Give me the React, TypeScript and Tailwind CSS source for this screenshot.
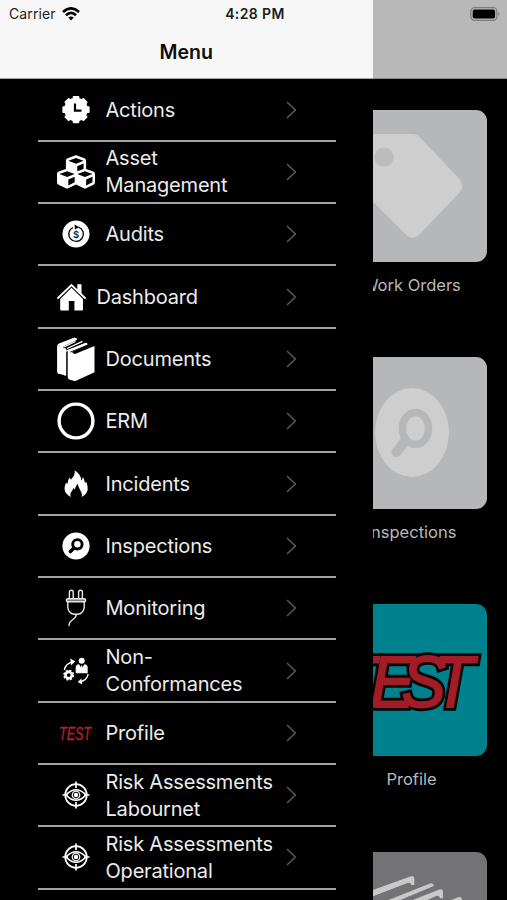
import React from 'react'
import { FaCubes } from 'react-icons/fa'

interface IconProps {
  children: React.ReactNode
  className?: string
  viewBox?: string
}

// every menu icon is drawn around its own centre
const Icon = ({
  children,
  className = 'w-[38px]',
  viewBox = '-19 -23 38 46',
}: IconProps) => (
  <svg
    viewBox={viewBox}
    className={`${className} h-[46px] shrink-0 overflow-visible`}
    fill="#fff"
  >
    {children}
  </svg>
)

const ActionsIcon = () => (
  <Icon>
    <circle r="11.8" cy="-.4" />
    {[0, 45, 90, 135].map((angle) => (
      <rect
        key={angle}
        x="-3.3"
        y="-13.6"
        width="6.6"
        height="27.2"
        rx="1"
        transform={`translate(0 -.4) rotate(${angle})`}
      />
    ))}
    <path d="M-1-6.5V.7H5.5" fill="none" stroke="#000" strokeWidth="2.2" />
  </Icon>
)

const AssetIcon = () => (
  <div className="w-[38px] h-[46px] shrink-0 flex items-center justify-center">
    <FaCubes size={38} color="#fff" />
  </div>
)

const AuditsIcon = () => (
  <Icon>
    <circle r="13.5" />
    <path
      d="M2.5-6.8A7.3 7.3 0 1 1-3-6.5"
      fill="none"
      stroke="#000"
      strokeWidth="1.3"
    />
    <path d="M-1.5-9.5L3-7L-1-4.2Z" fill="#000" />
    <text
      y="3.8"
      textAnchor="middle"
      fill="#222"
      className="font-['Inter',sans-serif] text-[9.5px] font-semibold"
    >
      $
    </text>
  </Icon>
)

const DashboardIcon = () => (
  <Icon className="w-[29px]" viewBox="-14.5 -23 29 46">
    <path
      d="M-13.5 1L0-12L13.5 1"
      fill="none"
      stroke="#fff"
      strokeWidth="1.9"
      strokeLinecap="round"
    />
    <path d="M5.8-12.8H10V-3L5.8-7Z" />
    <path d="M0-9.3L11.5 2V12.5Q11.5 13.5 10.5 13.5H2.9V4H-2.7V13.5H-10.3Q-11.3 13.5-11.3 12.5V2Z" />
  </Icon>
)

const DocumentsIcon = () => (
  <Icon>
    <path d="M-18.7-13Q-18.7-14.8-17-15.4L-1.5-21.4L.8-20.6V-19L-12.5-12.6V-11L-9.8-10.4V16.2L-11.5 16.8L-17-14.5V15.2Q-18.7 14.5-18.7 12.8Z" />
    <path d="M-18.7-13L-10.5-10V16.6L-17 14.8Q-18.7 14-18.7 12.8Z" />
    <path
      d="M-9-10.5L6.5-17.6M-10-7.8L10.6-15.6M-12-12L-.5-17.5"
      fill="none"
      stroke="#fff"
      strokeWidth="1.3"
    />
    <path d="M-8.3-6.8Q-8.3-8.6-6.5-9.3L9.5-16.3L11.3-15.7V-14L-3.5-7.6V-6L-1-5L18.5-13V13.2L0 21.7Q-1 22.2-2.3 21.8L-6.8 20.4Q-8.3 19.8-8.3 18Z" />
    <path d="M-6-6.8L11-13.7" stroke="#000" strokeWidth=".8" />
  </Icon>
)

const ErmIcon = () => (
  <Icon>
    <circle r="16.9" fill="none" stroke="#fff" strokeWidth="3.4" />
  </Icon>
)

const IncidentsIcon = () => (
  <Icon>
    <path d="M-1.3-13.4C2.8-10.8 5.3-7.5 5.2-3.5C6.3-4.5 6.8-5.8 6.8-7.2C8.5-4.8 8.1-2.7 9.1-1.1L10-2.4C12.8 3.8 12.7 10 5.7 12.9C7 8 3 6 1.7-.3C-.2 2-.3 3.5-1.5 5.5L-2.6 4C-3 7-7.2 8.5-4.9 12.9C-11.5 10.2-13 4.5-9.8-1.5L-8.7.3C-8-2-8.2-4.4-6.3-6.6L-5.2-4.3C-2.3-7-0.9-9.7-1.3-13.4Z" />
  </Icon>
)

const InspectionsIcon = () => (
  <Icon>
    <circle r="13.6" />
    <g fill="none" stroke="#000">
      <circle cx="1.4" cy="-1.7" r="4.7" strokeWidth="2.9" />
      <path d="M-2.2 2.2L-5.6 5.6" strokeWidth="3.5" strokeLinecap="round" />
    </g>
  </Icon>
)

const MonitoringIcon = () => (
  <Icon>
    <g fill="none" stroke="#e8e8e8" strokeWidth="1.4">
      <path d="M-6.6-9.5V-15.8a1.9 1.9 0 0 1 3.8 0V-9.5M2.6-9.5V-15.8a1.9 1.9 0 0 1 3.8 0V-9.5" />
      <rect x="-9.5" y="-9.3" width="19" height="3" rx="1" fill="#777" />
      <path d="M-8.2-6V-1C-8.2 3.5-5 6.3-1.5 6.3H1.5C5 6.3 8.2 3.5 8.2-1V-6" />
      <path d="M.3 6.5C0 12.5-6.8 10.5-7 17.5" strokeLinecap="round" />
    </g>
  </Icon>
)

const NonConformancesIcon = () => (
  <Icon>
    <circle cx="5.7" cy="-10.3" r="3" />
    <path d="M-.3 2.2V-3.2Q-.3-6.7 3-6.7L5.7-2.5L8.4-6.7Q11.7-6.7 11.7-3.2V2.2Z" />
    <path d="M5.7-6.8L6.6-3L5.7-1.5L4.8-3Z" />
    <circle
      cx="-7.3"
      cy="4.1"
      r="3.2"
      fill="none"
      stroke="#fff"
      strokeWidth="2.6"
    />
    <circle
      cx="-7.3"
      cy="4.1"
      r="4.7"
      fill="none"
      stroke="#fff"
      strokeWidth="1.6"
      strokeDasharray="2.2 1.49"
    />
    <g fill="none" stroke="#fff" strokeWidth="1.3">
      <path d="M-11.7-1Q-10.5-7.5-3.5-9" />
      <path d="M12.2 3Q10.8 9.7 4 10.6" />
    </g>
    <path d="M-5.8-12.4L-.8-9.7L-4.8-5.6ZM5.3 7.4L1.7 11L6.3 13.6Z" />
  </Icon>
)

const ProfileIcon = () => (
  <Icon>
    <text
      x="-17"
      y="7"
      textLength="32"
      lengthAdjust="spacingAndGlyphs"
      fill="#b3202c"
      className="font-['Liberation_Sans',sans-serif] text-[18px] italic"
      stroke="#b3202c"
      strokeWidth=".3"
    >
      TEST
    </text>
  </Icon>
)

const RiskIcon = () => (
  <Icon>
    <g fill="none" stroke="#fff" strokeWidth="1.7">
      <circle r="10.8" />
      <path d="M0-13.5V-7M0 13.5V7M-13.5 0H-8M13.5 0H8" />
      <path d="M-10 0Q0-10.5 10 0Q0 10.5-10 0Z" strokeWidth="1.7" />
      <circle r="3.8" strokeWidth="1.2" />
    </g>
    <circle r="2.2" />
  </Icon>
)

const menuItems = [
  { label: 'Actions', icon: <ActionsIcon /> },
  { label: 'Asset Management', icon: <AssetIcon /> },
  { label: 'Audits', icon: <AuditsIcon /> },
  { label: 'Dashboard', icon: <DashboardIcon /> },
  { label: 'Documents', icon: <DocumentsIcon /> },
  { label: 'ERM', icon: <ErmIcon /> },
  { label: 'Incidents', icon: <IncidentsIcon /> },
  { label: 'Inspections', icon: <InspectionsIcon /> },
  { label: 'Monitoring', icon: <MonitoringIcon /> },
  { label: 'Non-Conformances', icon: <NonConformancesIcon /> },
  { label: 'Profile', icon: <ProfileIcon /> },
  { label: 'Risk Assessments Labournet', icon: <RiskIcon /> },
  { label: 'Risk Assessments Operational', icon: <RiskIcon /> },
]

const StatusBar = () => (
  <div className="absolute inset-x-0 top-0 z-20 h-[27px] pl-[9px] pr-[6px] grid grid-cols-3 items-center text-[14px] text-[#1c1c1c]">
    <div className="flex items-center gap-[6px]">
      <span className="tracking-[0.1px]">Carrier</span>
      <svg viewBox="0 0 18 14" className="w-[18px] h-[14px]">
        <g fill="none" stroke="#000" strokeWidth="2.7">
          <path d="M1 5Q9-2.2 17 5" />
          <path d="M4 8.2Q9 3.6 14 8.2" />
        </g>
        <path d="M9 13.5L6.2 10.5Q9 8.3 11.8 10.5Z" />
      </svg>
    </div>
    <span className="text-center font-semibold tracking-[0.4px] whitespace-nowrap">
      4:28 PM
    </span>
    <svg viewBox="0 0 31 14" className="w-[31px] h-[14px] justify-self-end">
      <rect
        x=".9"
        y=".7"
        width="26"
        height="12.6"
        rx="3.6"
        fill="none"
        stroke="#7c7c7c"
        strokeWidth="1.2"
      />
      <rect x="2.7" y="2.5" width="22.4" height="9" rx="2" />
      <path d="M28.4 4.8Q30.4 7 28.4 9.2Z" fill="#7c7c7c" />
    </svg>
  </div>
)

const Drawer = () => (
  <div className="absolute left-0 top-0 z-10 w-[372.5px] h-full bg-black">
    <div className="h-[79px] pt-7 flex items-center justify-center bg-[#f7f7f7] border-b border-[#a5a5a5] text-[19.5px] font-semibold text-[#0c0c0c]">
      <span>Menu</span>
    </div>
    <ul className="pl-[38px] pt-[0.4px] w-[335.5px]">
      {menuItems.map((item) => (
        <li
          key={item.label}
          className="h-[62.33px] pl-[19px] pr-[38.5px] flex items-center border-b-2 border-[#a3a3a3] text-[20px] leading-[27px] tracking-[-0.2px] text-[#ececec]"
        >
          {item.icon}
          <span className="ml-[10.5px] pt-px w-[171px]">{item.label}</span>
          <svg
            viewBox="0 0 11 18"
            className="ml-auto w-[11px] h-[18px] shrink-0"
            fill="none"
            stroke="#535353"
            strokeWidth="1.7"
          >
            <path d="M1 1L9.3 9L1 17" />
          </svg>
        </li>
      ))}
    </ul>
  </div>
)

const logoLetters = (
  <text x="-1 38 72 107" y="103">
    TEST
  </text>
)

const tiles = [
  {
    label: 'Work Orders',
    color: 'bg-[#b5b7b9]',
    art: (
      <>
        <path
          d="M30 24H77Q81 24 84 27.5L123 68.5Q129 75.5 123.5 82.5L84 124Q77 130.5 71 125.5L20 75V34Q20 24 30 24Z"
          fill="#cecece"
        />
        <circle cx="48" cy="47" r="9.6" fill="#b9bbbc" />
      </>
    ),
  },
  {
    label: 'Inspections',
    color: 'bg-[#b5b7b9]',
    art: (
      <>
        <ellipse cx="76" cy="75.5" rx="37" ry="44.5" fill="#cecece" />
        <g fill="none" stroke="#b5b7b9">
          <ellipse cx="79.5" cy="71.5" rx="13" ry="16" strokeWidth="7.5" />
          <path d="M69 84L60.5 95" strokeWidth="10" strokeLinecap="round" />
        </g>
      </>
    ),
  },
  {
    label: 'Profile',
    color: 'bg-[#00818e]',
    art: (
      <g
        transform="scale(.91 1)"
        className="font-['Liberation_Sans',sans-serif] text-[73px] italic"
      >
        <g stroke="#0a0505" strokeWidth="7.5">
          {logoLetters}
        </g>
        <g fill="#a21d27" stroke="#a21d27" strokeWidth="1.8">
          {logoLetters}
        </g>
      </g>
    ),
  },
  {
    label: '',
    color: 'bg-[#737375]',
    art: (
      <g fill="#c9c9c9">
        <path d="M30 40.5L75 24.3Q78.3 23.5 78.3 27V33H75.5Q74.5 29.5 70 31.5L30 47Z" />
        <path d="M50 49L94 31.5Q97.7 30.5 97.7 34L62 49Z" />
        <path d="M74 49L103.5 37.5Q107 36.5 107 40V46.3H104Q103 42.5 99 44.5L89 49Z" />
        <path d="M113 49L122 45.3Q126 44.3 126 48V52H113Z" />
      </g>
    ),
  },
]

const App = () => {
  return (
    <div className="relative w-[507px] h-[900px] overflow-hidden bg-black font-['Inter','Liberation_Sans',sans-serif]">
      <StatusBar />
      <Drawer />
      <div className="h-[79px] bg-[#b8b8b8] border-b border-[#8a8a8a]"></div>
      <div className="ml-[336px] w-[151px] pt-[30.7px]">
        {tiles.map((tile, index) => (
          <div key={index} className="h-[247.3px]">
            <div
              className={`${tile.color} w-[151px] h-[152px] rounded-[11px] overflow-hidden`}
            >
              <svg viewBox="0 0 151 152" className="w-full h-full">
                {tile.art}
              </svg>
            </div>
            {tile.label && (
              <p className="mt-[11px] text-center text-[16.5px] leading-6 text-[#b9b9b9]">
                {tile.label}
              </p>
            )}
          </div>
        ))}
      </div>
    </div>
  )
}

export default App
